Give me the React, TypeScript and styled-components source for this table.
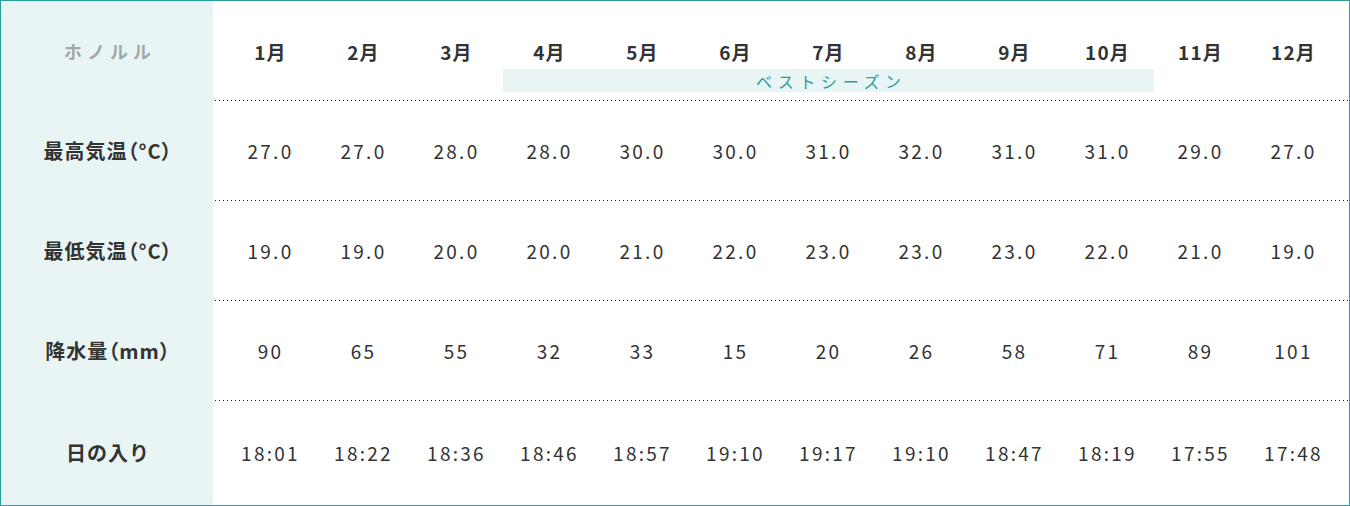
import React from 'react';
import styled, { createGlobalStyle } from 'styled-components';

// Data
const months = ['1月', '2月', '3月', '4月', '5月', '6月', '7月', '8月', '9月', '10月', '11月', '12月'];

const rows: { label: string; values: string[] }[] = [
  { label: '最高気温（°C）', values: ['27.0', '27.0', '28.0', '28.0', '30.0', '30.0', '31.0', '32.0', '31.0', '31.0', '29.0', '27.0'] },
  { label: '最低気温（°C）', values: ['19.0', '19.0', '20.0', '20.0', '21.0', '22.0', '23.0', '23.0', '23.0', '22.0', '21.0', '19.0'] },
  { label: '降水量（mm）', values: ['90', '65', '55', '32', '33', '15', '20', '26', '58', '71', '89', '101'] },
  { label: '日の入り', values: ['18:01', '18:22', '18:36', '18:46', '18:57', '19:10', '19:17', '19:10', '18:47', '18:19', '17:55', '17:48'] },
];

// Styled Components
const GlobalStyle = createGlobalStyle`
  html, body {
    margin: 0;
    padding: 0;
    background: #fff;
  }
  body {
    font-family: "Noto Sans CJK JP", "Noto Sans", sans-serif;
    color: #333;
  }
`;

const Table = styled.div`
  box-sizing: border-box;
  width: 1350px;
  height: 506px;
  border: 1px solid #2a9d9d;
  display: flex;
  flex-direction: column;
  overflow: hidden;
`;

const Row = styled.div<{ last?: boolean }>`
  display: grid;
  grid-template-columns: 212px 1fr;
  height: ${({ last }) => (last ? 'auto' : '100px')};
  flex: ${({ last }) => (last ? '1' : 'none')};
  background-image: ${({ last }) =>
    last ? 'none' : 'linear-gradient(to right, #222 0 1px, transparent 1px)'};
  background-size: 4px 1px;
  background-repeat: repeat-x;
  background-position: 2px bottom;
`;

const LabelCell = styled.div<{ muted?: boolean }>`
  background: #e9f5f5;
  display: flex;
  align-items: center;
  justify-content: center;
  font-size: ${({ muted }) => (muted ? '18px' : '20px')};
  font-weight: 700;
  color: ${({ muted }) => (muted ? '#a3a8a8' : '#333')};
  letter-spacing: ${({ muted }) => (muted ? '0.28em' : '0.05em')};
  padding-left: ${({ muted }) => (muted ? '6px' : '2px')};
  padding-bottom: 1px;
`;

const Paren = styled.span`
  font-feature-settings: "palt";
`;

const Cells = styled.div`
  display: grid;
  grid-template-columns: repeat(12, 1fr);
  padding: 0 9px 0 11px;
  align-items: center;
`;

const HeaderCells = styled(Cells)`
  grid-template-rows: 28px 23px;
  align-content: start;
  padding-top: 37px;
  row-gap: 3px;
`;

const MonthCell = styled.div`
  text-align: center;
  font-size: 19px;
  font-weight: 700;
  letter-spacing: 0.06em;
  line-height: 28px;
  grid-row: 1;
`;

const SeasonBar = styled.div`
  grid-row: 2;
  grid-column: 4 / 11;
  align-self: stretch;
  background: #e9f5f5;
  color: #2a9d9d;
  font-size: 16px;
  letter-spacing: 0.35em;
  padding-left: 0.35em;
  display: flex;
  align-items: center;
  justify-content: center;
  line-height: 1;
`;

const ValueCell = styled.div`
  text-align: center;
  font-size: 19px;
  letter-spacing: 0.12em;
  color: #333;
  padding-bottom: 1px;
`;

// split a label so that only the bracketed unit gets proportional metrics
const renderLabel = (label: string) => {
  const idx = label.indexOf('（');
  if (idx < 0) return label;
  return (
    <>
      {label.slice(0, idx)}
      <Paren>{label.slice(idx)}</Paren>
    </>
  );
};

export default function App() {
  return (
    <>
      <GlobalStyle />
      <Table>
        <Row>
          <LabelCell muted>ホノルル</LabelCell>
          <HeaderCells>
            {months.map((m) => (
              <MonthCell key={m}>{m}</MonthCell>
            ))}
            <SeasonBar>ベストシーズン</SeasonBar>
          </HeaderCells>
        </Row>
        {rows.map((r, i) => (
          <Row key={r.label} last={i === rows.length - 1}>
            <LabelCell>{renderLabel(r.label)}</LabelCell>
            <Cells>
              {r.values.map((v, j) => (
                <ValueCell key={j}>{v}</ValueCell>
              ))}
            </Cells>
          </Row>
        ))}
      </Table>
    </>
  );
}
